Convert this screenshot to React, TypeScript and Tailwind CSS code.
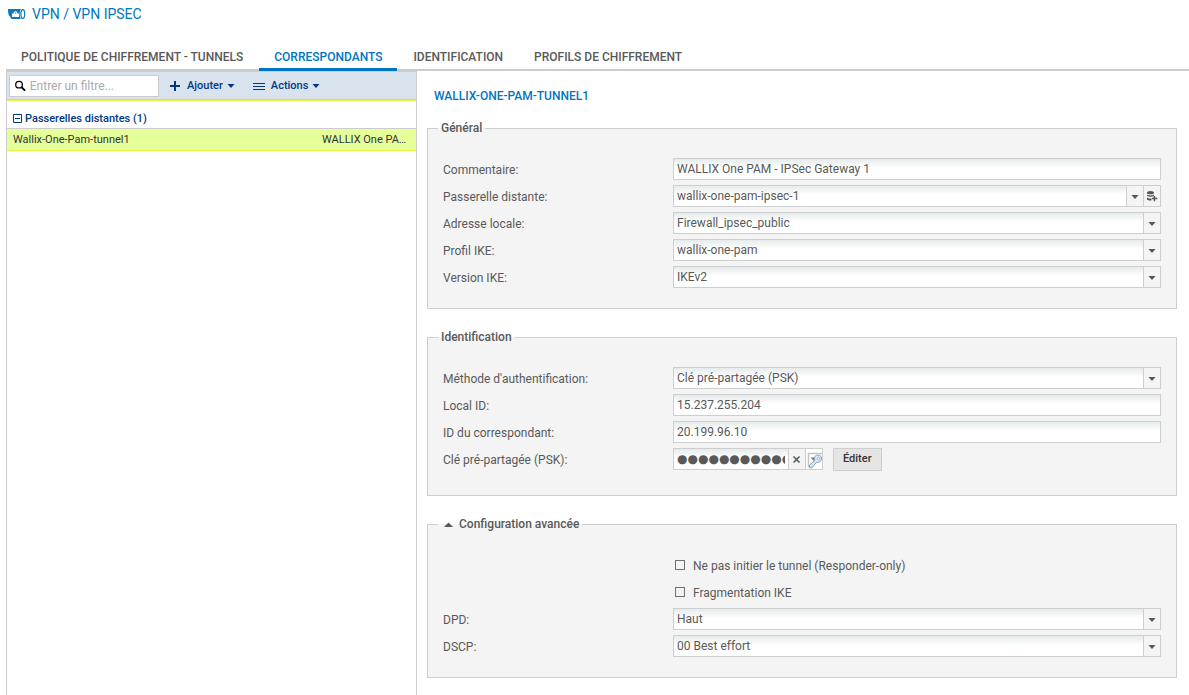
import type { ReactNode } from "react";
import clsx from "clsx";

const tabs = ["Politique de chiffrement - tunnels", "Correspondants", "Identification", "Profils de chiffrement"];

const fieldStyle =
  "h-[22px] min-w-0 rounded-none border border-[#cccecf] bg-[linear-gradient(#e6ebeb,#ffffff_9px)] px-[3px] text-xs text-[#595959] outline-none";

const cellStyle = "flex h-[22px] w-[18px] items-center justify-center border border-[#cccecf] bg-[#f4f4f4] text-[#555555]";

function Caret({ up = false }: { up?: boolean }) {
  if (up) {
    return (
      <svg width="9" height="5" viewBox="0 0 9 5" fill="currentColor" className="shrink-0">
        <path d="M0 5h9L4.500 .5z" />
      </svg>
    );
  }
  return (
    <svg width="8" height="4" viewBox="0 0 8 4" fill="currentColor" className="shrink-0">
      <path d="M.5 0h7L4 4z" />
    </svg>
  );
}

function VpnIcon() {
  return (
    <svg width="18" height="12" viewBox="0 0 18 12">
      <path d="M0 1h12.800c-1.500 2.800-1.500 7.200 0 10H4.500C3 11 2.300 10.200 2.200 8.500.6 8 0 5 0 1z" fill="#0b78c1" />
      <path d="M4 5.500h1.500L6 4c.3-1 2.700-1 3 0l.5 1.500H11V9H4zm3 0h1.200V4.600H7z" fill="#fff" fillRule="evenodd" />
      <ellipse cx="14.800" cy="6" rx="1.900" ry="4.400" fill="none" stroke="#0b78c1" strokeWidth="1.200" />
    </svg>
  );
}

function SearchIcon() {
  return (
    <svg width="12" height="12" viewBox="0 0 12 12" fill="none" stroke="#000">
      <circle cx="4.500" cy="4.500" r="3.700" strokeWidth="1.400" />
      <path d="M7.200 7.200l4 4" strokeWidth="2.200" />
    </svg>
  );
}

function DatabaseAddIcon() {
  return (
    <svg width="12" height="12" viewBox="0 0 12 12" fill="#555555">
      <ellipse cx="4.500" cy="2.700" rx="3.500" ry="1.600" />
      <path d="M1 4.500c1.500 1.200 5.500 1.200 7 0v1.300C6.500 7.100 2.500 7.100 1 5.800z" />
      <path d="M1 7.500c1.200 1 3 1.100 4.500.9v2.100C4 10.700 1.500 10.500 1 9.500z" />
      <path d="M7.700 6h1.500v1.800h2v1.500h-2v2H7.700v-2H6V7.800h1.700z" />
    </svg>
  );
}

function KeyIcon() {
  return (
    <svg width="16" height="20" viewBox="0 0 16 20" className="shrink-0">
      <path d="M2.500 18V4.500H16" fill="none" stroke="#c4c4c4" strokeWidth="1.500" />
      <path d="M4.500 8.500h6.500L8 12z" fill="#777" />
      <path
        d="M9 7.500c1.700-2 5.500-1.700 6.300.6.700 2.500-.6 5.200-3.200 5.300l-1.500-.3-4.700 5.700H3.500v-2.700l5.200-4.700c-.6-1.300-.4-2.900.3-3.900z"
        fill="#d5e7f6"
        stroke="#7f9fc0"
      />
      <circle cx="12.500" cy="9.500" r="1.200" fill="#fff" stroke="#7f9fc0" strokeWidth=".7" />
    </svg>
  );
}

function Row({ label, id, children }: { label: string; id: string; children: ReactNode }) {
  return (
    <div className="flex h-[22px] items-center">
      <label htmlFor={id} className="w-[230px] shrink-0 pt-[2px] leading-5">
        {label}
      </label>
      {children}
    </div>
  );
}

function TextField({ label, id, value }: { label: string; id: string; value: string }) {
  return (
    <Row label={label} id={id}>
      <input id={id} type="text" defaultValue={value} className={clsx(fieldStyle, "flex-1")} />
    </Row>
  );
}

type SelectFieldProps = { label: string; id: string; value: string; action?: ReactNode };

function SelectField({ label, id, value, action }: SelectFieldProps) {
  return (
    <Row label={label} id={id}>
      <div className="relative min-w-0 flex-1">
        <select id={id} className={clsx(fieldStyle, "block w-full appearance-none pr-5")}>
          <option>{value}</option>
        </select>
        <span className={clsx(cellStyle, "pointer-events-none absolute top-0 right-0 pt-[2px]")}>
          <Caret />
        </span>
      </div>
      {action}
    </Row>
  );
}

function Section({ title, children }: { title: ReactNode; children: ReactNode }) {
  return (
    <fieldset className="min-w-0 border border-[#cccecf] bg-[#f4f4f4] px-[15px] pt-[22px] pb-5">
      <legend className="-ml-[5px] px-[3px] leading-4 font-medium">{title}</legend>
      <div className="flex flex-col gap-[5px]">{children}</div>
    </fieldset>
  );
}

function CheckField({ label }: { label: string }) {
  return (
    <label className="ml-[232px] flex h-[22px] items-center gap-2">
      <input type="checkbox" className="size-[10px] appearance-none border border-[#707070] bg-[#f4f4f4] checked:bg-[#707070]" />
      <span className="pt-[2px] leading-5">{label}</span>
    </label>
  );
}

function PeerList() {
  return (
    <aside className="w-[411px] shrink-0 border-x border-t border-[#cccccc] text-[11px]">
      <div className="flex h-7 items-center border-b border-[#cccccc] bg-[#d9e3ee] pl-[2px] font-medium text-[#003882]">
        <label className="flex h-[22px] w-[150px] items-center gap-1 border border-[#cccccc] bg-white pl-[5px]">
          <SearchIcon />
          <input
            type="text"
            aria-label="Filtre"
            placeholder="Entrer un filtre..."
            className="w-full min-w-0 text-xs font-normal text-[#555555] outline-none placeholder:text-[#aaaaaa]"
          />
        </label>
        <button type="button" className="ml-[11px] flex h-5 items-center gap-[6px] pt-px">
          <svg width="11" height="10" viewBox="0 0 11 10" fill="currentColor">
            <path d="M4 0h2v4h4v2H6v4H4V6H0V4h4z" />
          </svg>
          <span className="flex items-center gap-1">
            Ajouter
            <Caret />
          </span>
        </button>
        <button type="button" className="ml-[18px] flex h-5 items-center gap-[6px] pt-px">
          <svg width="12" height="9" viewBox="0 0 12 9" fill="currentColor">
            <path d="M0 1h12v1H0zM0 4h12v1H0zM0 7h12v1H0z" />
          </svg>
          <span className="flex items-center gap-1">
            Actions
            <Caret />
          </span>
        </button>
      </div>
      <div className="border-t border-[#e4fb45]">
        <button
          type="button"
          className="flex h-[28px] w-full items-end gap-[3px] border-b border-[#cccccc] pb-px pl-[6px] leading-4 font-medium text-[#003882]"
        >
          <svg width="9" height="9" viewBox="0 0 9 9" fill="none" stroke="currentColor" className="mb-1">
            <path d="M.5.5h8v8h-8zM2 4.500h5" />
          </svg>
          Passerelles distantes (1)
        </button>
      </div>
      <div className="flex h-[22px] items-center border-b border-[#e4fb45] bg-[#e5ff99] pt-px pl-[6px] text-[#333333]">
        <span className="w-[309px]">Wallix-One-Pam-tunnel1</span>
        <span>WALLIX One PA…</span>
      </div>
    </aside>
  );
}

export default function App() {
  return (
    <div className="flex min-h-screen flex-col bg-white pl-[6px] font-['Roboto',sans-serif] text-xs text-[#595959]">
      <header className="flex h-7 items-center gap-[6px] pl-[2px] text-sm text-[#0076c0]">
        <VpnIcon />
        <h1>VPN / VPN IPSEC</h1>
      </header>

      <nav className="mt-4 flex h-[27px] gap-px border-b-2 border-[#cccccc]">
        {tabs.map((tab) => (
          <a
            key={tab}
            href="#"
            className={clsx(
              "h-[27px] border-b-3 px-[15px] pt-[5px] leading-4 font-medium uppercase",
              tab === "Correspondants" ? "border-[#0076c0] text-[#0076c0]" : "border-transparent",
            )}
          >
            {tab}
          </a>
        ))}
      </nav>

      <div className="flex flex-1">
        <PeerList />

        <main className="min-w-0 flex-1 pt-[17px] pr-3 pb-4 pl-[10px]">
          <h2 className="pl-[7px] leading-4 font-medium text-[#0076c0] uppercase">Wallix-One-Pam-tunnel1</h2>

          <form className="mt-4 flex flex-col gap-5">
            <Section title="Général">
              <TextField id="comment" label="Commentaire:" value="WALLIX One PAM - IPSec Gateway 1" />
              <SelectField
                id="gateway"
                label="Passerelle distante:"
                value="wallix-one-pam-ipsec-1"
                action={
                  <button type="button" aria-label="Ajouter un objet" className={clsx(cellStyle, "-ml-px")}>
                    <DatabaseAddIcon />
                  </button>
                }
              />
              <SelectField id="local-address" label="Adresse locale:" value="Firewall_ipsec_public" />
              <SelectField id="ike-profile" label="Profil IKE:" value="wallix-one-pam" />
              <SelectField id="ike-version" label="Version IKE:" value="IKEv2" />
            </Section>

            <Section title="Identification">
              <SelectField id="auth" label="Méthode d'authentification:" value="Clé pré-partagée (PSK)" />
              <TextField id="local-id" label="Local ID:" value="15.237.255.204" />
              <TextField id="peer-id" label="ID du correspondant:" value="20.199.96.10" />
              <div className="pb-[5px]">
                <Row id="psk" label="Clé pré-partagée (PSK):">
                  <input
                    id="psk"
                    type="text"
                    readOnly
                    value="●●●●●●●●●●●●●●●●"
                    className={clsx(fieldStyle, "w-[116px] font-['DejaVu_Sans',sans-serif] text-sm")}
                  />
                  <button type="button" aria-label="Effacer" className={clsx(cellStyle, "-ml-px")}>
                    <svg width="8" height="7" viewBox="0 0 8 7" fill="none" stroke="currentColor" strokeWidth="1.500">
                      <path d="M.5.5l6 6M6.500.5l-6 6" />
                    </svg>
                  </button>
                  <button type="button" aria-label="Afficher la clé" className={clsx(cellStyle, "-ml-px bg-white")}>
                    <KeyIcon />
                  </button>
                  <button
                    type="button"
                    className="ml-[10px] h-[23px] border border-[#cccecf] bg-[#e5e5e5] px-[9px] pt-px text-[11px] font-medium text-[#333333]"
                  >
                    Éditer
                  </button>
                </Row>
              </div>
            </Section>

            <Section
              title={
                <button type="button" className="flex items-center gap-[6px] pl-[3px]">
                  <Caret up />
                  Configuration avancée
                </button>
              }
            >
              <CheckField label="Ne pas initier le tunnel (Responder-only)" />
              <CheckField label="Fragmentation IKE" />
              <SelectField id="dpd" label="DPD:" value="Haut" />
              <SelectField id="dscp" label="DSCP:" value="00 Best effort" />
            </Section>
          </form>
        </main>
      </div>
    </div>
  );
}
